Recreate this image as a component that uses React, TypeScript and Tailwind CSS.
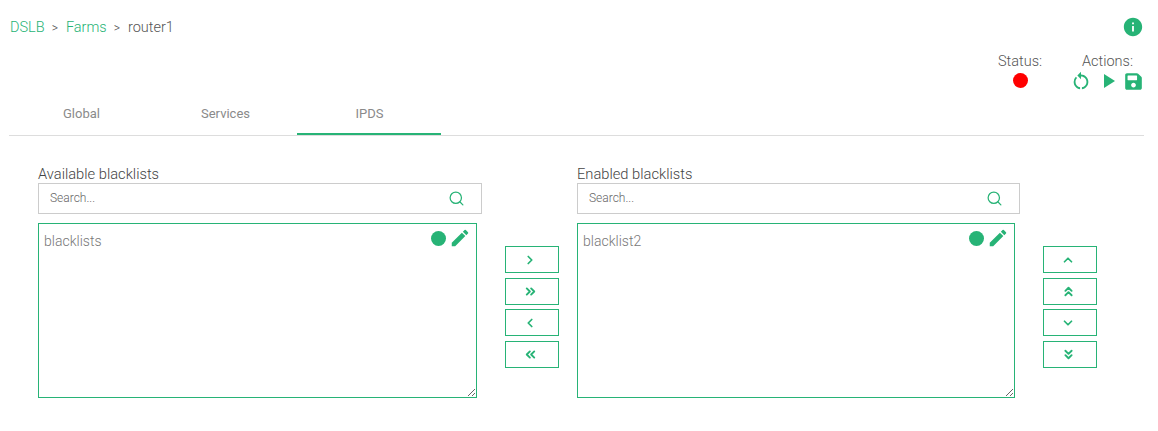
import { ReactNode } from "react";
import {
  ChevronDown,
  ChevronLeft,
  ChevronRight,
  ChevronUp,
  ChevronsDown,
  ChevronsLeft,
  ChevronsRight,
  ChevronsUp,
  Search,
} from "lucide-react";
import { MdEdit, MdInfo, MdPlayArrow, MdRestartAlt } from "react-icons/md";
import { FaSave } from "react-icons/fa";

function ListPanel({ title, item, className }: { title: string; item: string; className: string }) {
  return (
    <div className={`shrink-0 ${className}`}>
      <div className="h-[20px] text-[14.7px] leading-[22px] text-[#444] font-light">{title}</div>
      <div className="flex h-[31px] items-center border border-[#ccc] pl-[11px] pr-[16px]">
        <input
          placeholder="Search..."
          className="min-w-0 flex-1 pb-[2px] text-[12px] outline-none placeholder:text-[#666]"
        />
        <Search size={17} strokeWidth={1.75} className="text-[#27b376]" />
      </div>
      <div className="relative mt-[9px] h-[175px] mr-[5px]">
        <textarea
          readOnly
          defaultValue={item}
          className="block h-full w-full border border-[#27b376] px-[5px] py-[8px] text-[14px] leading-[18px] text-[#777] outline-none"
        />
        <div className="absolute right-[6px] top-[4px] flex items-center gap-[3px] text-[#27b376]">
          <span className="h-[15px] w-[15px] rounded-full bg-[#27b376]" />
          <MdEdit size={22} />
        </div>
      </div>
    </div>
  );
}

function MoveButtons({ icons }: { icons: ReactNode[] }) {
  return (
    <div className="ml-[23px] mt-[83px] flex w-[54px] shrink-0 flex-col gap-[4.67px]">
      {icons.map((icon, i) => (
        <button
          key={i}
          className="flex h-[27px] items-center justify-center border border-[#27b376] pr-[4px] text-[#27b376]"
        >
          {icon}
        </button>
      ))}
    </div>
  );
}

export default function App() {
  return (
    <div className="h-[431px] w-[1158px] overflow-hidden bg-white pl-[9px] pr-[14px] font-['Roboto',sans-serif] font-light">
      <div className="flex h-[54px] items-start justify-between pl-[1px] pt-[17px]">
        <div className="mt-[1px] flex items-center text-[14.5px] leading-[20px] text-[#555]">
          <span className="text-[#27b376]">DSLB</span>
          <span className="mx-[7px] text-[12px]">&gt;</span>
          <span className="ml-[1px] text-[#27b376]">Farms</span>
          <span className="mx-[7px] text-[12px]">&gt;</span>
          <span className="ml-[1px]">router1</span>
        </div>
        <MdInfo size={22} className="-mt-[1px] text-[#27b376]" />
      </div>

      <div className="flex h-[37px] justify-end text-[14.5px] leading-[16px] text-[#555]">
        <div className="mr-[40px] flex w-[44px] flex-col items-center">
          <span>Status:</span>
          <span className="mt-[3px] h-[15px] w-[15px] rounded-full bg-[#ff0000]" />
        </div>
        <div className="flex w-[62px] flex-col items-end">
          <span className="mr-[11px]">Actions:</span>
          <div className="-mt-[1px] flex items-center text-[#27b376]">
            <MdRestartAlt size={22} />
            <MdPlayArrow size={24} className="ml-[4px]" />
            <FaSave size={19} className="ml-[4px] mr-[1px]" />
          </div>
        </div>
      </div>

      <div className="flex h-[45px] border-b border-[#ddd] text-[13px] font-normal text-[#8a8a8a]">
        <div className="flex w-[144px] items-center justify-center pl-[1px] pt-[1px]">Global</div>
        <div className="flex w-[144px] items-center justify-center pl-[1px] pt-[1px]">Services</div>
        <div className="flex w-[144px] items-center justify-center border-b-2 border-[#27b376] pl-[1px] pt-[3px]">IPDS</div>
      </div>

      <div className="flex pl-[29px] pt-[27px]">
        <ListPanel title="Available blacklists" item="blacklists" className="w-[444px]" />
        <MoveButtons
          icons={[
            <ChevronRight size={14} strokeWidth={3} />,
            <ChevronsRight size={15} strokeWidth={3} />,
            <ChevronLeft size={14} strokeWidth={3} />,
            <ChevronsLeft size={15} strokeWidth={3} />,
          ]}
        />
        <div className="w-[18px] shrink-0" />
        <ListPanel title="Enabled blacklists" item="blacklist2" className="w-[443px]" />
        <MoveButtons
          icons={[
            <ChevronUp size={14} strokeWidth={3} />,
            <ChevronsUp size={15} strokeWidth={3} />,
            <ChevronDown size={14} strokeWidth={3} />,
            <ChevronsDown size={15} strokeWidth={3} />,
          ]}
        />
      </div>
    </div>
  );
}
